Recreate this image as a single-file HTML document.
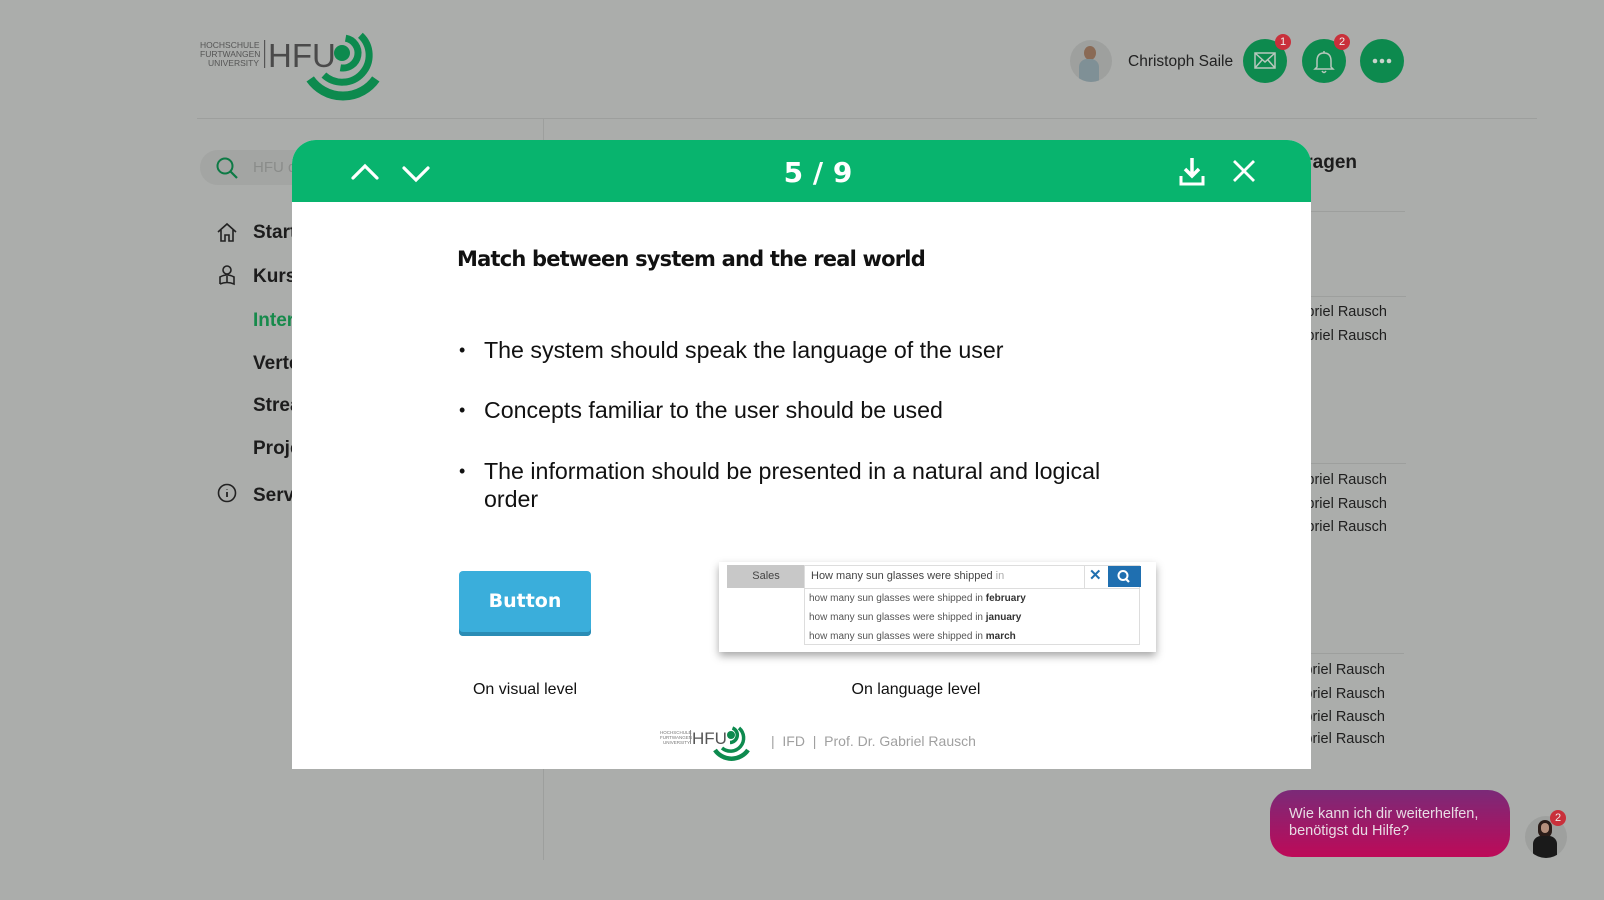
<!DOCTYPE html>
<html><head><meta charset="utf-8"><style>
*{margin:0;padding:0;box-sizing:border-box}
body{width:1604px;height:900px;overflow:hidden;background:#abadab;font-family:"Liberation Sans",sans-serif;position:relative;color:#1c1c1c}
.a{position:absolute}
.nav{position:absolute;left:253px;font-size:19px;font-weight:bold;color:#1c1c1c;line-height:1}
.rr{position:absolute;right:217px;font-size:14.5px;color:#1e1e1e;line-height:1;white-space:nowrap}
.hl{position:absolute;height:1px;background:#9d9f9d}
.cb{position:absolute;width:44px;height:44px;border-radius:50%;background:#0d8a4e;top:39px}
.bd{position:absolute;width:16px;height:16px;border-radius:50%;background:#c9303b;color:#eee;font-size:11px;text-align:center;line-height:16px;top:-5px;right:-4px}
.bul{position:absolute;left:484px;font-size:23.2px;color:#111;line-height:28px}
.bul:before{content:"•";position:absolute;left:-25px;font-size:18px}
</style></head><body>
<!-- logo -->
<svg class="a" style="left:196px;top:30px" width="200" height="75" viewBox="196 30 200 75">
<text x="200" y="48" font-family="Liberation Sans" font-size="8.5" fill="#555">HOCHSCHULE</text>
<text x="200" y="57" font-family="Liberation Sans" font-size="8.5" fill="#555">FURTWANGEN</text>
<text x="208" y="66" font-family="Liberation Sans" font-size="8.5" fill="#555">UNIVERSITY</text>
<rect x="264" y="40" width="1.2" height="28" fill="#555"/>
<text x="268" y="67" font-family="Liberation Sans" font-size="33" fill="#4a4a4a">HFU</text>
<circle cx="342" cy="53" r="8" fill="#0d8a4e"/>
<path d="M345.6 38.2 A15 15 0 0 1 340.4 67.8" stroke="#0d8a4e" stroke-width="7" fill="none"/>
<path d="M360.4 35.3 A27 27 0 1 1 323.9 75.1" stroke="#0d8a4e" stroke-width="7" fill="none" transform="rotate(0)"/>
<path d="M375.8 78.9 A40 40 0 0 1 310.2 78.9" stroke="#0d8a4e" stroke-width="9" fill="none"/>
</svg>
<div class="hl" style="left:197px;top:118px;width:1340px"></div>
<!-- top right -->
<div class="a" style="left:1070px;top:40px;width:42px;height:42px;border-radius:50%;background:#9ea09e;overflow:hidden">
<div class="a" style="left:14px;top:6px;width:12px;height:14px;border-radius:50%;background:#8a6a55"></div>
<div class="a" style="left:9px;top:19px;width:20px;height:28px;border-radius:8px 8px 0 0;background:#7f9096"></div></div>
<div class="a" style="left:1128px;top:53px;font-size:15.5px;color:#222">Christoph Saile</div>
<div class="cb" style="left:1243px"><svg width="44" height="44"><rect x="12" y="14" width="20" height="15" fill="none" stroke="#b8c8bd" stroke-width="1.5"/><path d="M12 14 L22 23 L32 14 M12 29 L19 21 M32 29 L25 21" stroke="#b8c8bd" stroke-width="1.5" fill="none"/></svg><div class="bd">1</div></div>
<div class="cb" style="left:1302px"><svg width="44" height="44"><path d="M15 28 L15 22 Q15 14 22 14 Q29 14 29 22 L29 28 L31 30 L13 30 Z M20 32 Q22 35 24 32 M22 12 L22 14" stroke="#b8c8bd" stroke-width="1.5" fill="none"/></svg><div class="bd">2</div></div>
<div class="cb" style="left:1360px"><svg width="44" height="44"><circle cx="15" cy="22" r="2.3" fill="#c8d4cc"/><circle cx="22" cy="22" r="2.3" fill="#c8d4cc"/><circle cx="29" cy="22" r="2.3" fill="#c8d4cc"/></svg></div>
<!-- sidebar -->
<div class="a" style="left:200px;top:150px;width:120px;height:35px;border-radius:18px;background:#a3a5a3"></div>
<svg class="a" style="left:215px;top:156px" width="26" height="26"><circle cx="10" cy="10" r="7.5" stroke="#0d7a45" stroke-width="2" fill="none"/><path d="M15.5 15.5 L22 22" stroke="#0d7a45" stroke-width="2.2"/></svg>
<div class="a" style="left:253px;top:159px;font-size:15px;color:#8a8c8a">HFU d</div>
<svg class="a" style="left:216px;top:221px" width="22" height="22"><path d="M2 11 L11 3 L20 11 M5 9 L5 20 L9 20 L9 14 L13 14 L13 20 L17 20 L17 9" stroke="#222" stroke-width="1.6" fill="none"/></svg>
<svg class="a" style="left:216px;top:264px" width="22" height="22"><circle cx="11" cy="6" r="4" stroke="#222" stroke-width="1.6" fill="none"/><path d="M4 20 L4 13 Q11 9 18 13 L18 20 Q11 17 4 20 M11 12 L11 19" stroke="#222" stroke-width="1.6" fill="none"/></svg>
<svg class="a" style="left:216px;top:483px" width="22" height="24"><circle cx="11" cy="10" r="8.5" stroke="#222" stroke-width="1.6" fill="none"/><path d="M11 9 L11 14 M11 6 L11 6.5" stroke="#222" stroke-width="1.8"/></svg>
<div class="nav" style="top:223px">Start</div>
<div class="nav" style="top:267px">Kurse</div>
<div class="nav" style="top:311px;color:#168a4b">Inter</div>
<div class="nav" style="top:354px">Verte</div>
<div class="nav" style="top:396px">Strea</div>
<div class="nav" style="top:439px">Proje</div>
<div class="nav" style="top:486px">Servi</div>
<div class="a" style="left:543px;top:118px;width:1px;height:742px;background:#9d9f9d"></div>
<!-- right -->
<div class="a" style="right:247px;top:152px;font-size:19px;font-weight:bold">Umfragen</div>
<div class="hl" style="left:1300px;top:211px;width:105px"></div>
<div class="hl" style="left:1300px;top:296px;width:106px"></div>
<div class="hl" style="left:1300px;top:463px;width:106px"></div>
<div class="hl" style="left:1300px;top:653px;width:104px"></div>
<div class="rr" style="top:305px">Gabriel Rausch</div>
<div class="rr" style="top:329px">Gabriel Rausch</div>
<div class="rr" style="top:473px">Gabriel Rausch</div>
<div class="rr" style="top:497px">Gabriel Rausch</div>
<div class="rr" style="top:520px">Gabriel Rausch</div>
<div class="rr" style="top:663px;right:219px">Gabriel Rausch</div>
<div class="rr" style="top:687px;right:219px">Gabriel Rausch</div>
<div class="rr" style="top:710px;right:219px">Gabriel Rausch</div>
<div class="rr" style="top:732px;right:219px">Gabriel Rausch</div>
<!-- chat -->
<div class="a" style="left:1270px;top:790px;width:240px;height:67px;border-radius:22px;background:linear-gradient(#7a2a78,#bd0a58);color:#e8dce4;font-size:14.5px;line-height:17px;padding:16px 0 0 19px">Wie kann ich dir weiterhelfen,<br>benötigst du Hilfe?</div>
<div class="a" style="left:1525px;top:816px;width:42px;height:42px;border-radius:50%;background:#9ea09e;overflow:hidden">
<div class="a" style="left:13px;top:4px;width:14px;height:18px;border-radius:7px;background:#2a1c18"></div>
<div class="a" style="left:16px;top:7px;width:8px;height:10px;border-radius:4px;background:#b58f7c"></div>
<div class="a" style="left:8px;top:20px;width:24px;height:22px;border-radius:8px 8px 0 0;background:#1a1a1a"></div></div>
<div class="a" style="left:1550px;top:810px;width:16px;height:16px;border-radius:50%;background:#c9303b;color:#eee;font-size:11px;text-align:center;line-height:16px">2</div>
<!-- modal -->
<div class="a" style="left:292px;top:140px;width:1019px;height:629px;background:#fff;border-radius:24px 24px 0 0;overflow:hidden">
<div class="a" style="left:0;top:0;width:1019px;height:62px;background:#08b46e"></div>
<svg class="a" style="left:55px;top:18px" width="90" height="30"><path d="M6 20 L18 8 L30 20" stroke="#fff" stroke-width="3.2" fill="none" stroke-linecap="round"/><path d="M57 10 L69 22 L81 10" stroke="#fff" stroke-width="3.2" fill="none" stroke-linecap="round"/></svg>
<div class="a" style="left:476px;width:100px;top:16px;text-align:center;font-size:28px;font-weight:bold;color:#fff;font-family:'DejaVu Sans',sans-serif">5 / 9</div>
<svg class="a" style="left:885px;top:16px" width="90" height="32"><path d="M15 2 L15 20 M8 13 L15 20 L22 13" stroke="#fff" stroke-width="3.5" fill="none"/><path d="M4 20 L4 28 L26 28 L26 20" stroke="#fff" stroke-width="3" fill="none"/><path d="M57 5 L77 25 M77 5 L57 25" stroke="#fff" stroke-width="2.8"/></svg>
</div>
<div class="a" style="left:457px;top:247px;font-size:21px;font-weight:bold;color:#111;font-family:'DejaVu Sans',sans-serif;letter-spacing:-0.8px">Match between system and the real world</div>
<div class="bul" style="top:336px">The system should speak the language of the user</div>
<div class="bul" style="top:396px">Concepts familiar to the user should be used</div>
<div class="bul" style="top:457px">The information should be presented in a natural and logical<br>order</div>
<div class="a" style="left:459px;top:571px;width:132px;height:65px;border-radius:4px;background:#3aaedb;box-shadow:inset 0 -4px 0 #2a8cb5;color:#fff;font-weight:bold;font-size:19px;text-align:center;line-height:60px;font-family:'DejaVu Sans',sans-serif">Button</div>
<div class="a" style="left:719px;top:562px;width:437px;height:90px;background:#fff;box-shadow:0 4px 8px rgba(0,0,0,.35);font-size:10px;color:#555">
<div class="a" style="left:8px;top:3px;width:78px;height:23px;background:#c8c8c8;text-align:center;line-height:23px;font-size:11px;color:#444">Sales</div>
<div class="a" style="left:85px;top:3px;width:336px;height:80px;border:1px solid #ddd"></div>
<div class="a" style="left:85px;top:26px;width:336px;height:1px;background:#ddd"></div>
<div class="a" style="left:92px;top:8px;font-size:11px;color:#444">How many sun glasses were shipped <span style="color:#aaa">in</span></div>
<div class="a" style="left:365px;top:3px;width:1px;height:23px;background:#ddd"></div>
<div class="a" style="left:370px;top:4px;font-size:15px;color:#1f6fb0;font-weight:bold">✕</div>
<div class="a" style="left:389px;top:4px;width:33px;height:21px;background:#1f6fb0"><svg width="33" height="21"><circle cx="15" cy="9.5" r="4.5" stroke="#fff" stroke-width="2" fill="none"/><path d="M18 13 L21 16" stroke="#fff" stroke-width="2.2"/></svg></div>
<div class="a" style="left:90px;top:31px">how many sun glasses were shipped in <b style="color:#333">february</b></div>
<div class="a" style="left:90px;top:50px">how many sun glasses were shipped in <b style="color:#333">january</b></div>
<div class="a" style="left:90px;top:69px">how many sun glasses were shipped in <b style="color:#333">march</b></div>
</div>
<div class="a" style="left:445px;width:160px;top:681px;text-align:center;font-size:16px;color:#111">On visual level</div>
<div class="a" style="left:816px;width:200px;top:681px;text-align:center;font-size:16px;color:#111">On language level</div>
<svg class="a" style="left:659px;top:726px" width="95" height="36">
<text x="1" y="8" font-size="4.5" fill="#777" font-family="Liberation Sans">HOCHSCHULE</text>
<text x="1" y="13" font-size="4.5" fill="#777" font-family="Liberation Sans">FURTWANGEN</text>
<text x="4" y="18" font-size="4.5" fill="#777" font-family="Liberation Sans">UNIVERSITY</text>
<rect x="31" y="4" width="0.8" height="14" fill="#777"/>
<text x="33" y="18" font-size="17" fill="#555" font-family="Liberation Sans">HFU</text>
<circle cx="72" cy="9" r="4" fill="#0d8a4e"/>
<path d="M73.5 2 A7.5 7.5 0 0 1 71 16.5" stroke="#0d8a4e" stroke-width="3.5" fill="none"/>
<path d="M80 2 A13 13 0 1 1 63 22" stroke="#0d8a4e" stroke-width="3.5" fill="none"/>
<path d="M89 24 A20 20 0 0 1 56 24" stroke="#0d8a4e" stroke-width="4.5" fill="none"/>
</svg>
<div class="a" style="left:771px;top:733px;font-size:14px;color:#a0a0a0">| &nbsp;IFD &nbsp;| &nbsp;Prof. Dr. Gabriel Rausch</div>
</body></html>
